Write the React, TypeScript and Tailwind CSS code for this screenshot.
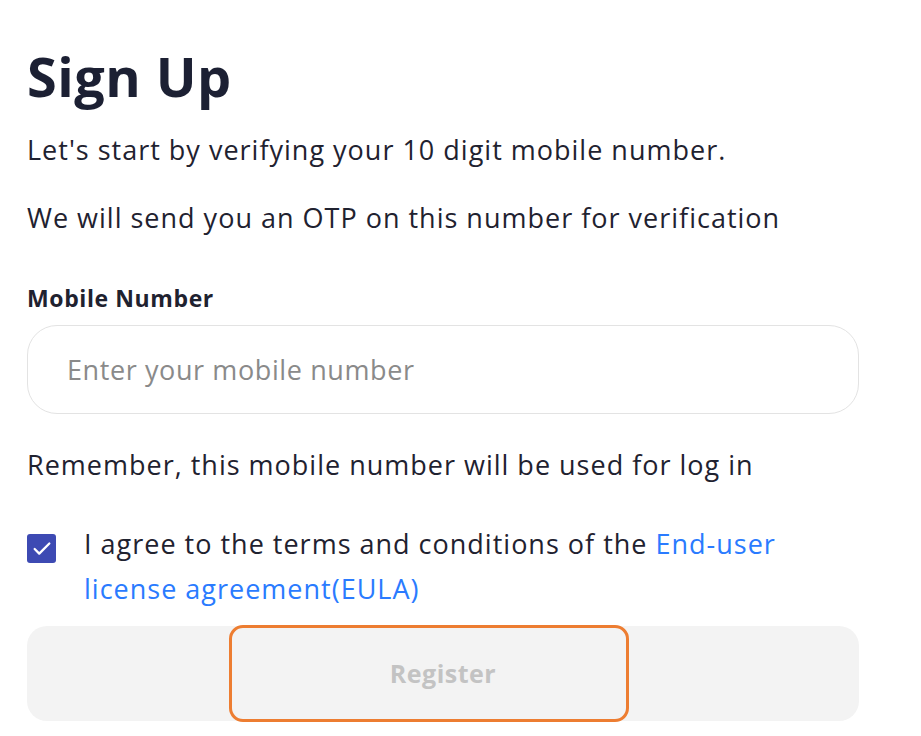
import { Check } from "lucide-react";

export default function App() {
  return (
    <div className="relative min-h-[736px] w-[921px] bg-white font-['Open_Sans','Noto_Sans',sans-serif] text-[#1f2230]">
      <div className="w-[859px] pl-[27px] pt-[44px]">
        <h1 className="text-[54px] font-bold leading-[64px] tracking-[0.5px] text-[#1c2033]">Sign Up</h1>

        <p className="mt-[26px] text-[27px] leading-[32px] tracking-[1px]">Let's start by verifying your 10 digit mobile number.</p>
        <p className="mt-[36px] text-[27px] leading-[32px] tracking-[1px]">We will send you an OTP on this number for verification</p>

        <label className="mt-[50px] block text-[23px] font-bold leading-[28px] tracking-[0.6px]">Mobile Number</label>
        <input
          type="text"
          placeholder="Enter your mobile number"
          className="mt-[13px] h-[89px] w-full rounded-[30px] border border-[#e3e3e3] px-[39px] text-[27px] tracking-[0.6px] text-[#333] placeholder:text-[#8a8a8a] outline-none"
        />

        <p className="mt-[35px] text-[27px] leading-[32px] tracking-[1px]">Remember, this mobile number will be used for log in</p>

        <div className="mt-[40px] flex items-start gap-[28px]">
          <span className="mt-[13px] flex h-[29px] w-[29px] shrink-0 items-center justify-center rounded-[3px] bg-[#3d4ab3]">
            <Check className="h-[22px] w-[22px] text-white" strokeWidth={2.5} />
          </span>
          <p className="text-[27px] leading-[45px] tracking-[1px]">
            I agree to the terms and conditions of the <a className="text-[#2a7bff]">End-user</a>
            <br />
            <a className="text-[#2a7bff]">license agreement(EULA)</a>
          </p>
        </div>

        <button className="mt-[15px] flex h-[95px] w-full items-center justify-center rounded-[20px] bg-[#f3f3f3] text-[25px] font-bold tracking-[0.5px] text-[#c3c3c3]">
          Register
        </button>
      </div>

      <div className="pointer-events-none absolute left-[229px] top-[625px] h-[97px] w-[400px] rounded-[14px] border-[3px] border-[#ed7d31]" />
    </div>
  );
}
